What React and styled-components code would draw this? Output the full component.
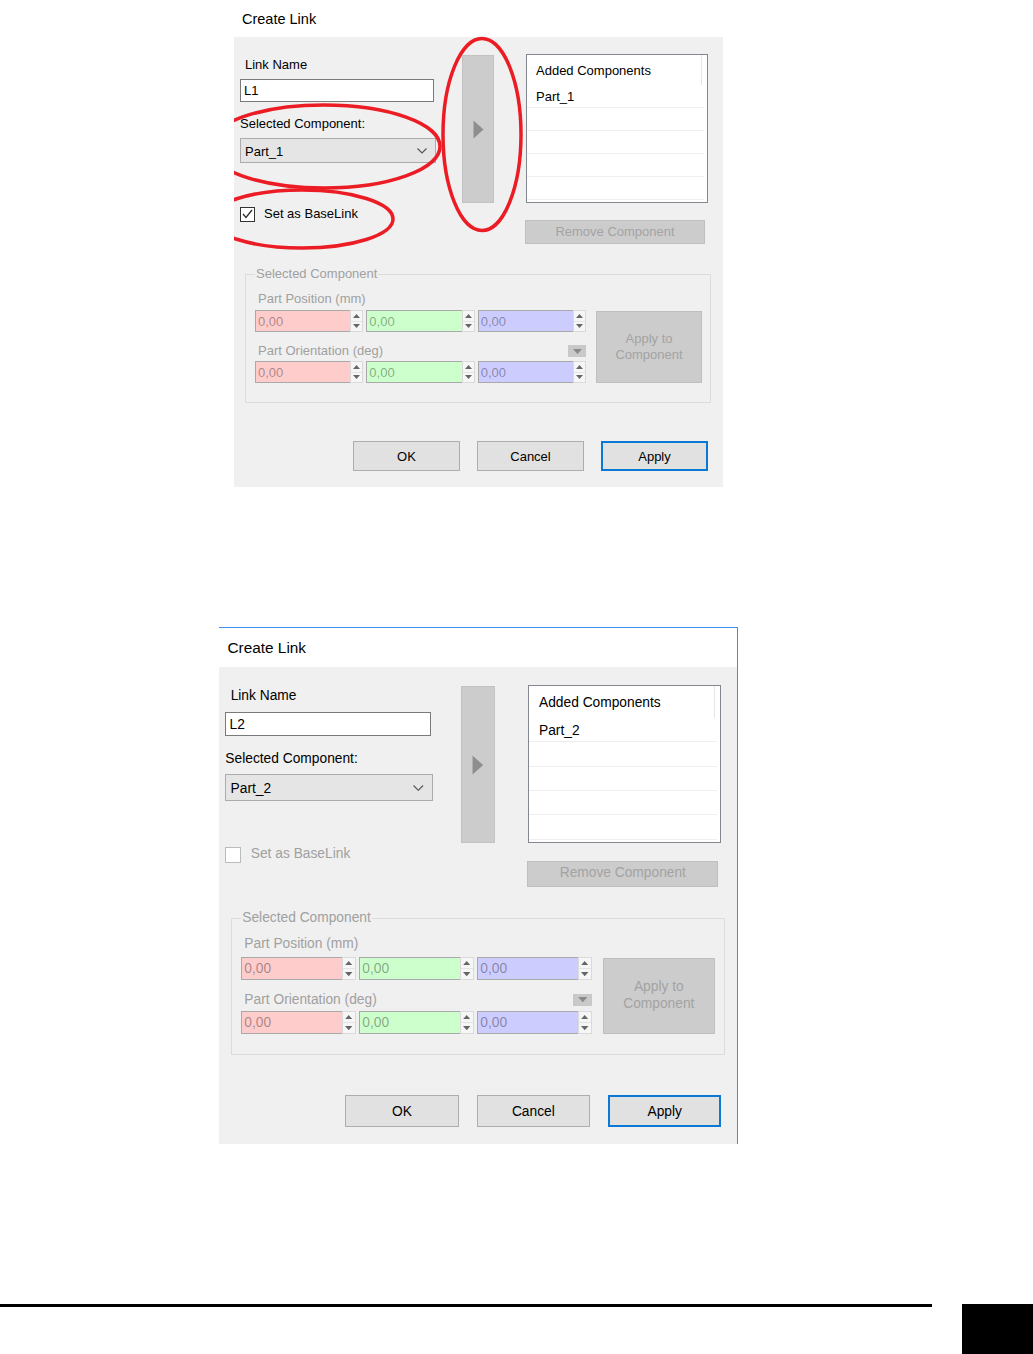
import React from "react";
import styled, { createGlobalStyle } from "styled-components";

const GlobalStyle = createGlobalStyle`
  body {
    margin: 0;
    background: #fff;
    font-family: "Liberation Sans", Arial, sans-serif;
  }
`;

const Page = styled.div`
  width: 1033px;
  height: 1354px;
  display: flex;
  flex-direction: column;
  overflow: hidden;
`;

const Slot = styled.div`
  width: fit-content;
  margin-left: ${(p) => p.$left}px;
  margin-top: ${(p) => p.$top || 0}px;
  border-top: ${(p) => (p.$framed ? "1px solid #3a90ea" : "none")};
  border-right: ${(p) => (p.$framed ? "1px solid #3a90ea" : "none")};
`;

const Frame = styled.div`
  position: relative;
  width: 489px;
  overflow: hidden;
  zoom: ${(p) => p.$zoom || 1};
`;

const TitleBar = styled.div`
  height: 37px;
  display: flex;
  align-items: center;
  padding-left: 8px;
  background: #fff;
  font-size: 14.5px;
  color: #000;
`;

const Body = styled.div`
  height: 450px;
  box-sizing: border-box;
  background: #f0f0f0;
  padding: 17px 15px 16px 6px;
  display: flex;
  flex-direction: column;
`;

const TopRow = styled.div`
  display: flex;
  align-items: flex-start;
`;

const LeftCol = styled.div`
  width: 196px;
  display: flex;
  flex-direction: column;
`;

const FieldLabel = styled.div`
  font-size: 13px;
  line-height: 16px;
  color: ${(p) => (p.$disabled ? "#a0a0a0" : "#000")};
  margin-top: ${(p) => p.$mt || 0}px;
  margin-left: ${(p) => p.$ml || 0}px;
`;

const TextBox = styled.div`
  width: 194px;
  height: 23px;
  box-sizing: border-box;
  margin-top: 6px;
  border: 1px solid #7a7a7a;
  background: #fff;
  padding-left: 3px;
  font-size: 13px;
  line-height: 22px;
`;

const Combo = styled.div`
  height: 25px;
  box-sizing: border-box;
  margin-top: 6px;
  border: 1px solid #acacac;
  background: #e5e5e5;
  padding: 1px 8px 0 4px;
  display: flex;
  align-items: center;
  justify-content: space-between;
  font-size: 13px;
`;

const CheckRow = styled.div`
  display: flex;
  align-items: center;
  gap: 9px;
  margin-top: 43px;
`;

const CheckBox = styled.div`
  width: 15px;
  height: 15px;
  box-sizing: border-box;
  border: 1px solid ${(p) => (p.$disabled ? "#bcbcbc" : "#333")};
  background: #fff;
  display: flex;
  align-items: center;
  justify-content: center;
`;

const ArrowButton = styled.div`
  width: 32px;
  height: 148px;
  box-sizing: border-box;
  margin: 1px 0 0 26px;
  background: #cccccc;
  border: 1px solid #c2c2c2;
  display: flex;
  align-items: center;
  justify-content: center;
`;

const RightCol = styled.div`
  width: 182px;
  margin-left: 32px;
  display: flex;
  flex-direction: column;
`;

const ListView = styled.div`
  height: 149px;
  box-sizing: border-box;
  border: 1px solid #828790;
  background: #fff;
  font-size: 13px;
  overflow: hidden;
`;

const ListHeader = styled.div`
  height: 30px;
  margin-right: 5px;
  border-right: 1px solid #e5e5e5;
  padding: 1px 0 0 9px;
  box-sizing: border-box;
  display: flex;
  align-items: center;
`;

const ListRow = styled.div`
  height: 21px;
  margin-right: 3px;
  border-bottom: 1px solid #efefef;
  padding: 1px 0 0 9px;
  display: flex;
  align-items: center;
`;

const FlatButton = styled.div`
  box-sizing: border-box;
  background: #cccccc;
  border: 1px solid #bfbfbf;
  color: #a3a3a3;
  font-size: 13px;
  line-height: 16px;
  text-align: center;
  display: flex;
  align-items: center;
  justify-content: center;
`;

const RemoveButton = styled(FlatButton)`
  width: 180px;
  height: 24px;
  margin: 17px 0 0 -1px;
`;

const ApplyToButton = styled(FlatButton)`
  width: 106px;
  height: 72px;
  margin-left: 10px;
  align-self: flex-end;
`;

const Group = styled.fieldset`
  margin: 22px -3px 0 5px;
  padding: 9px 8px 19px 9px;
  border: 1px solid #dcdcdc;
  min-width: 0;
`;

const Legend = styled.legend`
  margin-left: 0;
  padding: 0 1px;
  font-size: 13px;
  line-height: 16px;
  color: #a0a0a0;
`;

const GroupInner = styled.div`
  display: flex;
`;

const SpinBlock = styled.div`
  width: 331px;
  display: flex;
  flex-direction: column;
`;

const SpinLabelRow = styled.div`
  display: flex;
  align-items: center;
  justify-content: space-between;
  margin-top: ${(p) => p.$mt || 0}px;
`;

const SpinRow = styled.div`
  display: flex;
  gap: 3px;
  margin-top: ${(p) => p.$mt || 0}px;
`;

const Spin = styled.div`
  flex: 1;
  height: 22px;
  display: flex;
`;

const SpinField = styled.div`
  flex: 1;
  box-sizing: border-box;
  background: ${(p) => p.$tint};
  border: 1px solid #a9a9a9;
  border-right: none;
  padding-left: 2px;
  font-size: 13px;
  line-height: 21px;
  color: rgba(0, 0, 0, 0.36);
`;

const SpinButtons = styled.div`
  width: 13px;
  box-sizing: border-box;
  border: 1px solid #dadada;
  background: #f6f6f6;
  display: flex;
  flex-direction: column;
`;

const SpinHalf = styled.div`
  flex: 1;
  display: flex;
  align-items: center;
  justify-content: center;
  & + & {
    border-top: 1px solid #e4e4e4;
  }
`;

const MiniDrop = styled.div`
  width: 18px;
  height: 12px;
  background: #c9c9c9;
  display: flex;
  align-items: center;
  justify-content: center;
`;

const ButtonRow = styled.div`
  margin-top: auto;
  display: flex;
  justify-content: flex-end;
  gap: 17px;
`;

const DlgButton = styled.div`
  width: 107px;
  height: 30px;
  box-sizing: border-box;
  background: #e1e1e1;
  border: ${(p) => (p.$primary ? "2px solid #0c78d6" : "1px solid #adadad")};
  font-size: 13px;
  padding-top: 1px;
  display: flex;
  align-items: center;
  justify-content: center;
`;

const Overlay = styled.svg`
  position: absolute;
  top: 0;
  left: 0;
  pointer-events: none;
`;

const Footer = styled.div`
  margin-top: auto;
  height: 50px;
  display: flex;
  align-items: flex-start;
`;

const Rule = styled.div`
  width: 932px;
  height: 3px;
  background: #000;
`;

const PageTab = styled.div`
  width: 71px;
  height: 50px;
  margin-left: 30px;
  background: #000;
`;

const tints = ["#ffcccc", "#ccffcc", "#ccccff"];

const Chevron = () => (
  <svg width="10" height="6" viewBox="0 0 10 6">
    <polyline points="0.5,0.5 5,5 9.5,0.5" fill="none" stroke="#555" strokeWidth="1.1" />
  </svg>
);

const Tick = () => (
  <svg width="11" height="10" viewBox="0 0 11 10">
    <polyline points="1,5 4,8.5 10,1" fill="none" stroke="#333" strokeWidth="1.4" />
  </svg>
);

const Tri = ({ up }) => (
  <svg width="7" height="4" viewBox="0 0 7 4">
    <polygon points={up ? "0,4 3.5,0 7,4" : "0,0 7,0 3.5,4"} fill="#666" />
  </svg>
);

const SpinRowView = ({ mt }) => (
  <SpinRow $mt={mt}>
    {tints.map((t) => (
      <Spin key={t}>
        <SpinField $tint={t}>0,00</SpinField>
        <SpinButtons>
          <SpinHalf>
            <Tri up />
          </SpinHalf>
          <SpinHalf>
            <Tri />
          </SpinHalf>
        </SpinButtons>
      </Spin>
    ))}
  </SpinRow>
);

const Annotations = () => (
  <Overlay width="489" height="487">
    <g fill="none" stroke="#ec1c24" strokeWidth="3.5">
      <ellipse cx="90" cy="146.5" rx="116" ry="41.5" />
      <ellipse cx="68" cy="219" rx="91" ry="29" />
      <ellipse cx="248" cy="134.5" rx="39" ry="96" />
    </g>
  </Overlay>
);

const CreateLinkDialog = ({ linkName, part, baseLink, zoom, annotated }) => (
  <Frame $zoom={zoom}>
    <TitleBar>Create Link</TitleBar>
    <Body>
      <TopRow>
        <LeftCol>
          <FieldLabel $mt={3} $ml={5}>Link Name</FieldLabel>
          <TextBox>{linkName}</TextBox>
          <FieldLabel $mt={14}>Selected Component:</FieldLabel>
          <Combo>
            <span>{part}</span>
            <Chevron />
          </Combo>
          <CheckRow>
            <CheckBox $disabled={!baseLink}>{baseLink && <Tick />}</CheckBox>
            <FieldLabel $disabled={!baseLink}>Set as BaseLink</FieldLabel>
          </CheckRow>
        </LeftCol>
        <ArrowButton>
          <svg width="11" height="19" viewBox="0 0 11 19">
            <polygon points="0.5,0.5 10.5,9.5 0.5,18.5" fill="#8e8e8e" />
          </svg>
        </ArrowButton>
        <RightCol>
          <ListView>
            <ListHeader>Added Components</ListHeader>
            <ListRow>{part}</ListRow>
            <ListRow />
            <ListRow />
            <ListRow />
            <ListRow />
          </ListView>
          <RemoveButton>Remove Component</RemoveButton>
        </RightCol>
      </TopRow>
      <Group>
        <Legend>Selected Component</Legend>
        <GroupInner>
          <SpinBlock>
            <SpinLabelRow>
              <FieldLabel $disabled $ml={3}>Part Position (mm)</FieldLabel>
            </SpinLabelRow>
            <SpinRowView mt={3} />
            <SpinLabelRow $mt={11}>
              <FieldLabel $disabled $ml={3}>Part Orientation (deg)</FieldLabel>
              <MiniDrop>
                <svg width="9" height="5" viewBox="0 0 9 5">
                  <polygon points="0,0 9,0 4.5,5" fill="#8a8a8a" />
                </svg>
              </MiniDrop>
            </SpinLabelRow>
            <SpinRowView mt={2} />
          </SpinBlock>
          <ApplyToButton>
            Apply to
            <br />
            Component
          </ApplyToButton>
        </GroupInner>
      </Group>
      <ButtonRow>
        <DlgButton>OK</DlgButton>
        <DlgButton>Cancel</DlgButton>
        <DlgButton $primary>Apply</DlgButton>
      </ButtonRow>
    </Body>
    {annotated && <Annotations />}
  </Frame>
);

const App = () => {
  return (
    <Page>
      <GlobalStyle />
      <Slot $left={234}>
        <CreateLinkDialog linkName="L1" part="Part_1" baseLink annotated />
      </Slot>
      <Slot $left={219} $top={140} $framed>
        <CreateLinkDialog linkName="L2" part="Part_2" zoom={1.06} />
      </Slot>
      <Footer>
        <Rule />
        <PageTab />
      </Footer>
    </Page>
  );
};

export default App;
